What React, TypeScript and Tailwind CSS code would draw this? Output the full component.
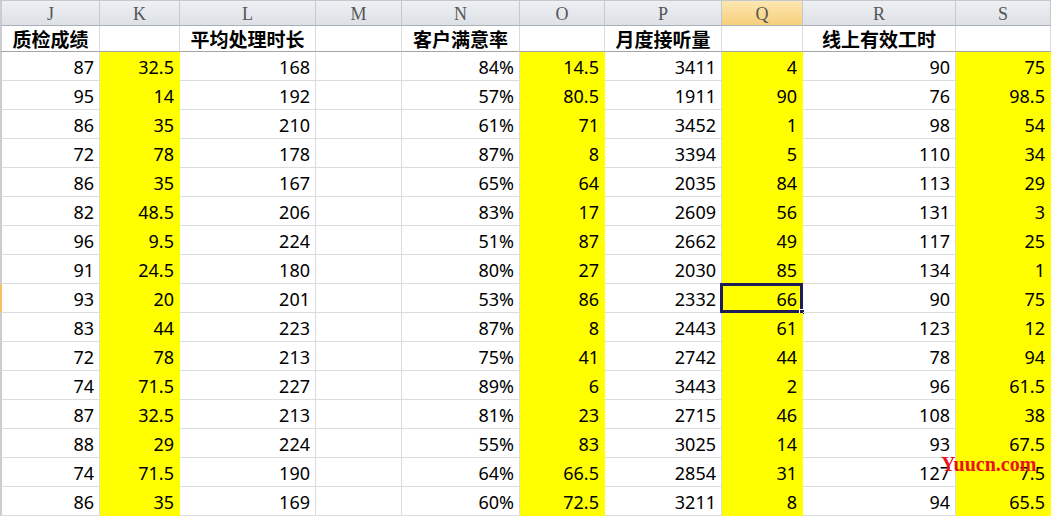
const COLS = [
  { key: 'J', title: '质检成绩', yellow: false },
  { key: 'K', title: '', yellow: true },
  { key: 'L', title: '平均处理时长', yellow: false },
  { key: 'M', title: '', yellow: false },
  { key: 'N', title: '客户满意率', yellow: false },
  { key: 'O', title: '', yellow: true },
  { key: 'P', title: '月度接听量', yellow: false },
  { key: 'Q', title: '', yellow: true },
  { key: 'R', title: '线上有效工时', yellow: false },
  { key: 'S', title: '', yellow: true },
];

const ROWS: string[][] = [
  ['87', '32.5', '168', '', '84%', '14.5', '3411', '4', '90', '75'],
  ['95', '14', '192', '', '57%', '80.5', '1911', '90', '76', '98.5'],
  ['86', '35', '210', '', '61%', '71', '3452', '1', '98', '54'],
  ['72', '78', '178', '', '87%', '8', '3394', '5', '110', '34'],
  ['86', '35', '167', '', '65%', '64', '2035', '84', '113', '29'],
  ['82', '48.5', '206', '', '83%', '17', '2609', '56', '131', '3'],
  ['96', '9.5', '224', '', '51%', '87', '2662', '49', '117', '25'],
  ['91', '24.5', '180', '', '80%', '27', '2030', '85', '134', '1'],
  ['93', '20', '201', '', '53%', '86', '2332', '66', '90', '75'],
  ['83', '44', '223', '', '87%', '8', '2443', '61', '123', '12'],
  ['72', '78', '213', '', '75%', '41', '2742', '44', '78', '94'],
  ['74', '71.5', '227', '', '89%', '6', '3443', '2', '96', '61.5'],
  ['87', '32.5', '213', '', '81%', '23', '2715', '46', '108', '38'],
  ['88', '29', '224', '', '55%', '83', '3025', '14', '93', '67.5'],
  ['74', '71.5', '190', '', '64%', '66.5', '2854', '31', '127', '7.5'],
  ['86', '35', '169', '', '60%', '72.5', '3211', '8', '94', '65.5'],
];

// active cell: Q9 (row index 8, col index 7)
const ACTIVE_ROW = 8;
const ACTIVE_COL = 7;

export default function App() {
  return (
    <div className="relative w-[1051px] h-[518px] overflow-hidden bg-white font-['Noto_Sans','Noto_Sans_CJK_SC',sans-serif] text-black">
      <div className="grid grid-cols-[100px_80px_136px_86px_118px_85px_117px_81px_153px_95px] grid-rows-[26px_26px_repeat(17,29px)]">
        {/* column letters */}
        {COLS.map((c, i) => (
          <div
            key={c.key}
            className={`flex items-center justify-center pt-[3px] border-t border-t-[#c3c8ce] border-b border-b-[#a9b0b8] border-r border-r-[#c3c8ce] font-['Liberation_Serif',serif] text-[18px] text-[#555] ${
              i === ACTIVE_COL
                ? 'bg-linear-to-b from-[#fde7b0] to-[#f6cf7c]'
                : 'bg-linear-to-b from-[#eef0f3] to-[#dde1e6]'
            } ${i === 0 ? 'border-l-2 border-l-[#c9cdd3]' : ''}`}
          >
            {c.key}
          </div>
        ))}

        {/* title row */}
        {COLS.map((c, i) => (
          <div
            key={'t' + c.key}
            className={`flex items-center justify-center border-r border-r-[#d8dadc] border-b border-b-[#a3a3a3] font-['Noto_Sans_CJK_SC',sans-serif] font-bold text-[19px] leading-none whitespace-nowrap ${
              i === 0 ? 'border-l-2 border-l-[#c9cdd3]' : ''
            }`}
          >
            {c.title}
          </div>
        ))}

        {/* data */}
        {ROWS.map((row, r) =>
          row.map((v, i) => {
            const yellow = COLS[i].yellow;
            const active = r === ACTIVE_ROW && i === ACTIVE_COL;
            return (
              <div
                key={r + '-' + i}
                className={`relative flex items-center justify-end pr-[5px] pt-[2px] text-[18px] leading-none border-r border-b ${
                  yellow ? 'bg-[#ffff00] border-[#ffff00]' : 'border-[#dadcdd]'
                } ${
                  i === 0
                    ? r === ACTIVE_ROW
                      ? 'border-l-2 border-l-[#f3c065]'
                      : 'border-l-2 border-l-[#c9cdd3]'
                    : ''
                }`}
              >
                {v}
                {active && (
                  <>
                    <div className="absolute -left-[2px] -top-[1px] -right-[1px] -bottom-[1px] border-[3px] border-[#1d1d58]" />
                    <div className="absolute -right-[3px] -bottom-[3px] w-[6px] h-[6px] bg-[#1d1d58] border border-white" />
                  </>
                )}
              </div>
            );
          })
        )}
      </div>

      {/* watermark */}
      <div className="absolute left-[941px] top-[454px] font-['Liberation_Serif',serif] font-bold text-[20px] text-[#e8141c] leading-none">
        Yuucn.com
      </div>
    </div>
  );
}
